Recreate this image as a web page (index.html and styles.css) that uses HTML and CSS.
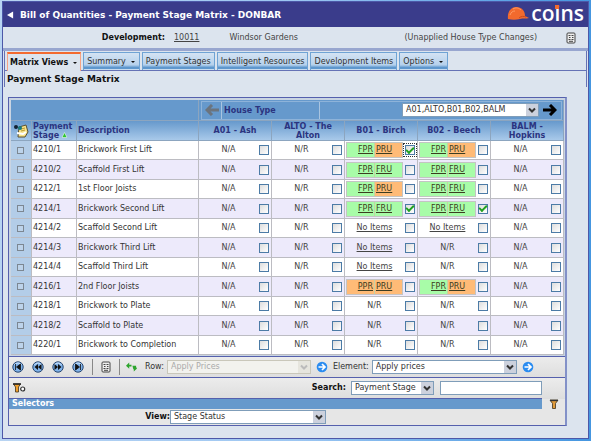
FILE: index.html
```
<!DOCTYPE html>
<html lang="en">
<head>
<meta charset="utf-8">
<title>Bill of Quantities - Payment Stage Matrix</title>
<link rel="stylesheet" href="styles.css">
</head>
<body>
<svg class="defs" aria-hidden="true">
  <symbol id="down" viewBox="0 0 12 12"><path d="M3 4.500 6 7.500 9 4.500" fill="none" stroke="currentColor" stroke-width="2"/></symbol>
  <symbol id="sheet" viewBox="0 0 10 12"><rect x="1" y="1" width="8" height="10" rx="1" fill="#eee" stroke="#444"/><path d="M2.500 3.500h2M5.500 3.500h2M3 5.500h1.500M6 5.500h1.500M2.500 7.500h2M5.500 7.500h2M3 9.300h4" stroke="#444" stroke-width="1"/></symbol>
  <symbol id="go" viewBox="0 0 12 12"><circle cx="6" cy="6" r="5.300" fill="#2b8cf0"/><path d="M2.500 6h6M6 3l3 3-3 3" fill="none" stroke="#fff" stroke-width="1.700"/></symbol>
  <symbol id="disc" viewBox="0 0 12 12"><circle cx="6" cy="6" r="5.200" fill="#7fb2ea" stroke="#27466f"/><path d="M2.500 4a4 4 0 0 1 7 0" fill="none" stroke="#cfe4fb"/></symbol>
  <symbol id="funnel" viewBox="0 0 10 10"><path d="M1 1h8L6.500 4.500v5h-3v-5z" fill="#e09a3a" stroke="#40321c" stroke-width=".8"/><path d="M1 1.500h8" stroke="#333" stroke-width="1.300"/></symbol>
</svg>
<div class="window">
  <header class="titlebar">
    <svg class="back" viewBox="0 0 8 8"><path d="M7 0v8L0 4z" fill="#fff"/></svg>
    <h1>Bill of Quantities - Payment Stage Matrix - DONBAR</h1>
    <div class="brand">
      <svg class="hat" viewBox="0 0 22 14"><path d="M1 13C0 6 4 1 9 1c6 0 9 4 9 9l4 2c-3 1-6 0-9 1-4 1-8 1-12 0z" fill="#f26a2e"/><path d="M6 3c3-2 6-1 8 1M3 9c1-3 3-4 5-4" stroke="#ff9a63" fill="none"/><path d="M12 12c2-2 5-2 7-1" stroke="#c94a1c" fill="none"/></svg>
      <span class="wordmark">coins<i class="dot"></i></span>
    </div>
  </header>
  <div class="infobar">
    <b class="dev">Development:</b>
    <a class="devno" href="#">10011</a>
    <span class="devname">Windsor Gardens</span>
    <span>(Unapplied House Type Changes)</span>
    <svg class="sheet"><use href="#sheet"/></svg>
  </div>
  <div class="strip"></div>
  <nav class="tabs">
    <a class="tab active" href="#">Matrix Views <i class="caret"></i></a>
    <a class="tab" href="#">Summary <i class="caret"></i></a>
    <a class="tab" href="#">Payment Stages</a>
    <a class="tab" href="#">Intelligent Resources</a>
    <a class="tab" href="#">Development Items</a>
    <a class="tab" href="#">Options <i class="caret"></i></a>
  </nav>
  <h2>Payment Stage Matrix</h2>
  <main class="panel">
    <div class="tablewrap">
    <table>
      <colgroup><col class="c-pick"><col class="c-stage"><col class="c-desc"><col span="5"></colgroup>
      <thead>
        <tr class="top">
          <td colspan="3"></td>
          <td colspan="5">
            <div class="housebar">
              <button class="arrow prev" aria-label="Previous"><svg viewBox="0 0 14 12"><path d="M14 6H4M7 1 2 6l5 5" fill="none" stroke="#6b747e" stroke-width="3"/></svg></button>
              <label class="house" for="house">House Type</label>
              <span class="select housesel"><select id="house"><option>A01,ALTO,B01,B02,BALM</option></select><svg><use href="#down"/></svg></span>
              <button class="arrow" aria-label="Next"><svg viewBox="0 0 14 12"><path d="M0 6h10M7 1l5 5-5 5" fill="none" stroke="#000" stroke-width="3"/></svg></button>
            </div>
          </td>
        </tr>
        <tr class="names">
          <th><svg class="notes" viewBox="0 0 15 14"><path d="M5 3 12 1l2 7-3 5H4z" fill="#f7e28a" stroke="#5a5030"/><path d="M7 5l4-1M7 7l4-1" stroke="#b79a35"/><path d="M3 9l6 1 3-2" fill="none" stroke="#fff" stroke-width="2"/><circle cx="2" cy="3" r="2" fill="#123"/><circle cx="6" cy="4" r="2" fill="#167a80"/></svg></th>
          <th class="left">Payment<br>Stage <svg class="sort" viewBox="0 0 6 6"><path d="M3 0l3 6H0z" fill="#2fc52f" stroke="#fff" stroke-width=".6"/></svg></th>
          <th class="left">Description</th>
          <th>A01 - Ash</th><th>ALTO - The<br>Alton</th><th>B01 - Birch</th><th>B02 - Beech</th><th>BALM -<br>Hopkins</th>
        </tr>
      </thead>
      <tbody id="rows"></tbody>
    </table>
    </div>
    <div class="bar actions">
      <button class="icon" aria-label="First"><svg><use href="#disc"/><path d="M3.500 3v6M8.500 3v6L4.500 6z" fill="#111" stroke="#111" stroke-width=".8"/></svg></button>
      <button class="icon" aria-label="Back"><svg><use href="#disc"/><path d="M6 3v6L2.500 6zM9.500 3v6L6 6z" fill="#111"/></svg></button>
      <button class="icon" aria-label="Forward"><svg><use href="#disc"/><path d="M6 3v6l3.500-3zM2.500 3v6L6 6z" fill="#111"/></svg></button>
      <button class="icon" aria-label="Last"><svg><use href="#disc"/><path d="M8.500 3v6M3.500 3v6l4-3z" fill="#111" stroke="#111" stroke-width=".8"/></svg></button>
      <i class="sep"></i>
      <svg class="sheet"><use href="#sheet"/></svg>
      <i class="sep"></i>
      <svg class="swap" viewBox="0 0 12 10"><path d="M0 3.500 3.500 0v2.500H6v2H3.500V7zM12 6.500 8.500 10V7.500H8L7 3.500h4V5z" fill="#2da52d"/></svg>
      <label class="rowlabel" for="row">Row:</label>
      <span class="select off rowsel"><select id="row" disabled><option>Apply Prices</option></select><svg><use href="#down"/></svg></span>
      <button class="icon go" aria-label="Apply to row"><svg><use href="#go"/></svg></button>
      <label for="element">Element:</label>
      <span class="select elsel"><select id="element"><option>Apply prices</option></select><svg><use href="#down"/></svg></span>
      <button class="icon go" aria-label="Apply to element"><svg><use href="#go"/></svg></button>
    </div>
    <div class="bar search">
      <svg class="filter" viewBox="0 0 13 10"><path d="M.5 1h7L5.500 4v5h-3V4z" fill="#f0a02c" stroke="#40321c" stroke-width=".8"/><path d="M0 1h8" stroke="#222" stroke-width="1.500"/><circle cx="9.700" cy="6" r="2" fill="#fff" stroke="#333" stroke-width="1.200"/></svg>
      <label for="by">Search:</label>
      <span class="select bysel"><select id="by"><option>Payment Stage</option></select><svg><use href="#down"/></svg></span>
      <input class="text" type="text" aria-label="Search text">
    </div>
    <div class="selectors">
      <div class="selmain">
        <h3>Selectors</h3>
        <div class="view">
          <label for="view">View:</label>
          <span class="select viewsel"><select id="view"><option>Stage Status</option></select><svg><use href="#down"/></svg></span>
        </div>
      </div>
      <button class="icon funnel" aria-label="Filter"><svg><use href="#funnel"/></svg></button>
    </div>
  </main>
</div>
<script src="rows.js"></script>
</body>
</html>
```
FILE: rows.js
```
// Each row: stage, description, B01 value, B02 value; "*" marks a ticked box.
const rows = [
  ["4210/1", "Brickwork First Lift", "FPR PRU*", "FPR PRU"],
  ["4210/2", "Scaffold First Lift", "FPR FRU", "FPR FRU"],
  ["4212/1", "1st Floor Joists", "FPR PRU", "FPR FRU"],
  ["4214/1", "Brickwork Second Lift", "FPR FRU*", "FPR FRU*"],
  ["4214/2", "Scaffold Second Lift", "No Items", "No Items"],
  ["4214/3", "Brickwork Third Lift", "No Items", "N/R"],
  ["4214/4", "Scaffold Third Lift", "No Items", "N/R"],
  ["4216/1", "2nd Floor Joists", "PPR PRU", "FPR PRU"],
  ["4218/1", "Brickwork to Plate", "N/R", "N/R"],
  ["4218/2", "Scaffold to Plate", "N/R", "N/R"],
  ["4220/1", "Brickwork to Completion", "N/R", "N/R"]
];

function cell(value, name, focused) {
  const ticked = value.endsWith("*");
  const text = value.replace("*", "");
  let body = `<span class="value">${text}</span>`;
  if (text === "No Items") {
    body = `<span class="value"><a href="#">${text}</a></span>`;
  } else if (/^.PR/.test(text)) {
    const parts = text.split(" ").map(p =>
      `<a class="${p[0] === "F" ? "full" : "part"}" href="#"><u>${p}</u></a>`);
    body = `<span class="status">${parts.join("")}</span>`;
  }
  return `<td><div class="cell">${body}<span class="tick${focused ? " focused" : ""}">` +
    `<input type="checkbox" aria-label="${name}"${ticked ? " checked" : ""}></span></div></td>`;
}

document.getElementById("rows").innerHTML = rows.map(([stage, desc, b01, b02], i) =>
  `<tr><td class="pick"><input type="checkbox" aria-label="Select ${stage}"></td>` +
  `<td class="txt">${stage}</td><td class="txt">${desc}</td>` +
  cell("N/A", stage + " A01") + cell("N/R", stage + " ALTO") +
  cell(b01, stage + " B01", i === 0) + cell(b02, stage + " B02") +
  cell("N/A", stage + " BALM") + "</tr>").join("");
```
FILE: styles.css
```
* { box-sizing: border-box; }
body {
  margin: 0;
  padding: 1px 2px 2px;
  background: linear-gradient(90deg, #b8d4f2, #9cc6f2 50%, #4596e0);
  font: 8px/12px "DejaVu Sans", Verdana, sans-serif;
  color: #333;
}
h1, h2, h3 { margin: 0; font-size: inherit; }
a { color: inherit; }
button { padding: 0; border: 0; background: none; }
svg { display: block; flex: none; }
.defs { position: absolute; width: 0; height: 0; }

.window { border: 1px solid #4d58a8; background: #dce4ee; padding-bottom: 12px; }
.titlebar {
  display: flex; align-items: center; gap: 6px;
  height: 25px; padding: 0 4px;
  background: #3a3c8b; color: #fff;
}
.titlebar h1 { flex: 1; font-size: 9px; white-space: nowrap; }
.back { width: 7px; height: 8px; }
.brand { display: flex; align-items: center; align-self: flex-start; gap: 2px; }
.hat { width: 22px; height: 14px; }
.wordmark { position: relative; font: 600 21px/22px "Open Sans", sans-serif; }
.dot { position: absolute; left: 24px; top: 3px; width: 4px; height: 4px; background: #f26a2e; }

.infobar { display: flex; align-items: center; height: 21px; padding-right: 12px; color: #444; }
.dev { width: 162px; text-align: right; color: #111; }
.devno { margin-left: 9px; }
.devname { flex: 1; margin-left: 30px; }
.sheet { width: 10px; height: 12px; }
.infobar .sheet { margin-left: 29px; }
.strip { height: 3px; background: #98a6cf; }

.tabs {
  display: flex; gap: 2px; height: 20px; margin: 0 1px; padding: 1px 1px 0 2px;
  border: solid #6572b5; border-width: 0 1px 1px; white-space: nowrap;
}
.tab {
  display: flex; align-items: center; gap: 5px; padding: 0 3px;
  border: 1px solid #6fa3d4; border-bottom: 0;
  background: linear-gradient(#d4e3f3, #b5d1ec 70%, #5e97cd 85%, #5e97cd 92%, #c8dcf0 94%);
  text-decoration: none;
}
.tab.active {
  padding: 0 2px;
  border: 1px solid #f5a284; border-top: 2px solid #f36a30; border-bottom: 0;
  margin-bottom: -1px; background: #dce4ee; font-weight: bold; color: #111;
}
.caret { border: 2px solid transparent; border-top-color: #111; border-bottom: 0; margin-right: 1px; }
h2 { margin: 0 1px; padding: 2px 2px; border: solid #6572b5; border-width: 0 1px; font-size: 9px; color: #111; }

.panel { margin: 10px 21px 0 5px; border: 1px solid #5560ad; border-right: 2px solid #8391c8; background: #e6e6e6; }
.tablewrap { padding: 2px 1px 1px 2px; background: #c9d4e2; }
table { width: 100%; table-layout: fixed; border-collapse: separate; border-spacing: 0; background: #fff; }
.c-pick { width: 21px; }
.c-stage { width: 45px; }
.c-desc { width: 122px; }
th, td { padding: 0; border: solid #bcbcc2; border-width: 0 1px 1px 0; }
.top td { height: 21px; background: #6699cc; border-color: #8ca5bf; }
.names th {
  height: 20px; padding: 0 1px; line-height: 9px; color: #2b3480;
  background: linear-gradient(#6699cc, #a9c9ea); border-color: #8ca5bf;
}
.names .left { text-align: left; }
.notes { width: 15px; height: 14px; margin: 0 auto; }
.sort { display: inline-block; width: 5px; height: 6px; }
.housebar { display: flex; align-items: center; height: 19px; margin: 0 1px 0 2px; border: 1px solid #8eb3d9; }
.arrow { display: grid; place-items: center; width: 22px; align-self: stretch; }
.arrow svg { width: 14px; height: 12px; }
.prev { width: 20px; border-right: 1px solid #a9c4e0; }
.house {
  align-self: stretch; width: 98px; padding: 3px 2px; margin-right: auto;
  border-right: 1px solid #a9c4e0; font-weight: bold; color: #2b3480;
}

tbody tr { height: 19px; }
tbody tr:nth-child(even) { height: 20px; background: #edeafb; }
.txt { padding-left: 1px; white-space: nowrap; }
.pick { background: #b3cde8; }
.cell { display: flex; align-items: center; padding-left: 1px; height: 18px; }
.value { flex: 1; text-align: center; white-space: nowrap; color: #444; }
.status { display: flex; flex: 1; height: 16px; border: 1px solid #c4c4c4; line-height: 14px; }
.status a { flex: 1; text-decoration: none; color: #3c3c20; }
.status a:first-child { text-align: right; border-right: 1px solid #c4d3a4; padding-right: 1px; }
.status a:last-child { padding-left: 1px; }
.full { background: #a8fca8; }
.part { background: #ffbb77; }
.tick { display: grid; place-items: center; width: 14px; height: 14px; }
.focused { outline: 1px dotted #333; outline-offset: -1px; }
input[type="checkbox"] {
  appearance: none; display: grid; place-items: center; margin: 0;
  width: 10px; height: 10px; border: 1px solid #4c7ba6; background: linear-gradient(135deg, #ddd, #fff);
}
input[type="checkbox"]:checked::after {
  content: ""; width: 6px; height: 3px; margin-top: -2px;
  border: solid #21a121; border-width: 0 0 2px 2px; transform: rotate(-45deg);
}
.pick input[type="checkbox"] { width: 7px; height: 7px; margin: 0 6px; border-color: #7c8792; background: #bdd3ea; }

.select { display: grid; grid-template-columns: 1fr 12px; align-items: center; height: 14px; border: 1px solid #7f9db9; background: #fff; }
.select select {
  grid-area: 1 / 1 / 2 / 3; appearance: none; width: 100%; height: 12px; padding: 0 3px;
  border: 0; background: none; font: inherit; color: #333;
}
.select svg { grid-area: 1 / 2; width: 12px; height: 12px; background: #ccd1dd; color: #333; pointer-events: none; }
.select.off { border-color: #c9c7ba; background: #f2f2ee; }
.off select { color: #aaa; opacity: 1; }
.select.off svg { background: #e6e5de; color: #bbb; }
.housesel { width: 137px; }
.rowsel { width: 144px; }
.elsel { width: 145px; }
.bysel { width: 83px; }
.viewsel { width: 156px; }

.bar { display: flex; align-items: center; height: 21px; border-top: 1px solid #5560ad; background: linear-gradient(#ececec, #dedede); }
.icon svg { width: 12px; height: 12px; }
.actions { padding-left: 3px; gap: 8px; }
.actions .sep { align-self: stretch; width: 1px; margin: 2px 0; background: #888; }
.swap { width: 11px; height: 10px; }
.actions .sep + .swap { margin-left: -2px; }
.actions label + .select { margin: 0 -3px 0 -5px; }
.go + label { margin-left: -3px; }
.search { padding: 0 23px 0 4px; }
.search label { margin-left: auto; font-weight: bold; color: #111; }
.search .select { margin: 0 6px 0 5px; }
.filter { width: 13px; height: 10px; }
.text { width: 102px; height: 14px; padding: 0 2px; border: 1px solid #7f9db9; background: #fff; font: inherit; }
.selectors { display: flex; }
.selmain { flex: 1; }
h3 { padding: 0 3px; border-top: 1px solid #5560ad; background: #6699cc; color: #fff; line-height: 10px; }
.view { display: flex; align-items: center; height: 16px; }
.view label { width: 161px; text-align: right; font-weight: bold; color: #111; }
.funnel { display: grid; place-items: start center; width: 23px; border-top: 1px solid #ddd; }
.funnel svg { width: 10px; height: 10px; }
```
